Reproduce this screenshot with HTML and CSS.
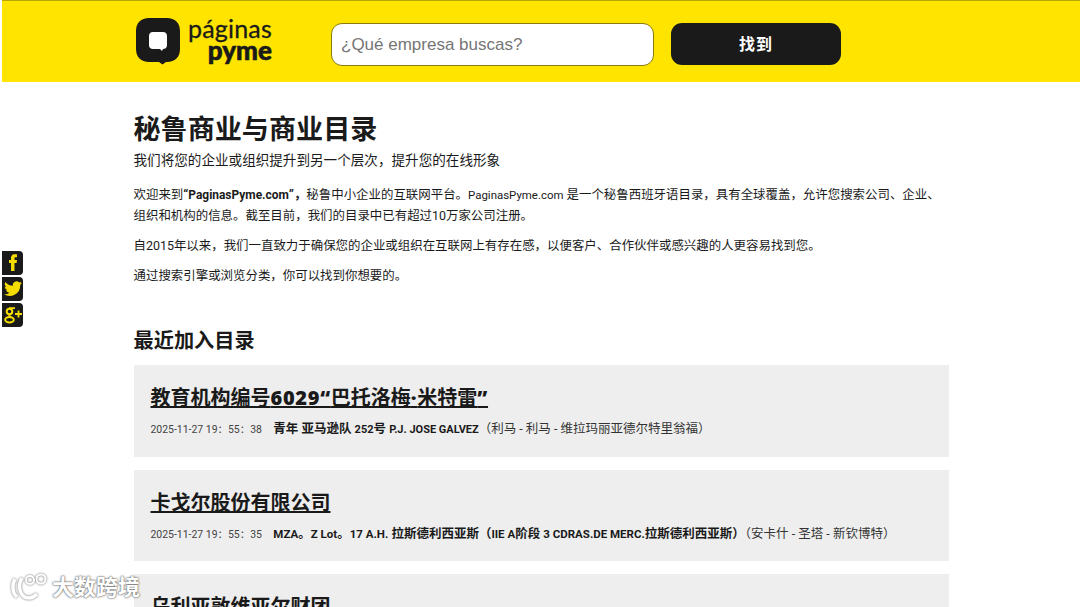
FILE: index.html
```html
<!DOCTYPE html>
<html lang="zh">
<head>
<meta charset="utf-8">
<title>秘鲁商业与商业目录</title>
<link rel="stylesheet" href="styles.css">
</head>
<body>
<header class="topbar">
  <div class="topbar-inner">
    <a class="logo">
      <svg class="logo-mark" width="46" height="48" viewBox="0 0 46 48">
        <path d="M13 1h18c8 0 13 5 13 13v18c0 8-5 13-13 13h-1l-3.500 2.500L23 45H13C5 45 0 40 0 32V14C0 6 5 1 13 1z" fill="#1a1a1a"/>
        <path d="M17 15h10c2.500 0 4 1.500 4 4v9c0 2.500-1.500 4-4 4l-1 2-2-2h-7c-2.500 0-4-1.500-4-4v-9c0-2.500 1.500-4 4-4z" fill="#fff"/>
      </svg>
      <span class="logo-text"><span class="logo-top">páginas</span><span class="logo-bottom">pyme</span></span>
    </a>
    <div class="search-box">¿Qué empresa buscas?</div>
    <div class="search-btn">找到</div>
  </div>
</header>

<aside class="social">
  <span class="social-item"><svg width="22" height="23" viewBox="0 0 22 23"><path d="M9 20v-8H7V9h2V7c0-2.500 1.300-3.800 3.600-3.800H15v3h-1.500c-.8 0-1 .4-1 1.100V9H15l-.4 3h-2.100v8z" fill="#f5dc00"/></svg></span>
  <span class="social-item"><svg width="22" height="23" viewBox="0 0 22 23"><path d="M20 6c-.7.3-1.300.5-2.100.6.800-.5 1.300-1.200 1.600-2-.7.400-1.500.7-2.300.9a3.700 3.700 0 0 0-6.300 3.300C7.900 8.600 5.200 7.200 3.400 5a3.700 3.700 0 0 0 1.100 4.900c-.6 0-1.200-.2-1.700-.5 0 1.800 1.300 3.300 3 3.700-.5.100-1.100.2-1.700.1.500 1.500 1.800 2.500 3.400 2.600A7.500 7.500 0 0 1 2 17.300 10.500 10.500 0 0 0 18.200 8c.7-.5 1.300-1.200 1.800-2z" fill="#f5dc00"/></svg></span>
  <span class="social-item"><svg width="22" height="23" viewBox="0 0 22 23" fill="none" stroke="#f5dc00"><circle cx="7.500" cy="8.500" r="2.800" stroke-width="2"/><ellipse cx="7.500" cy="16.800" rx="4.300" ry="2.700" stroke-width="2"/><path d="M7 5.200h6M8.500 11.300c-1.800 1-1.500 2 0 3" stroke-width="1.800"/><path d="M16.500 7.500v7M13 11h7" stroke-width="1.800"/></svg></span>
</aside>

<main class="content">
  <section class="intro">
    <h1>秘鲁商业与商业目录</h1>
    <h2 class="lead">我们将您的企业或组织提升到另一个层次，提升您的在线形象</h2>
    <p>欢迎来到<b>“<span class="lt-b">PaginasPyme.com</span>”，</b>秘鲁中小企业的互联网平台。<span class="lt">PaginasPyme.com</span> 是一个秘鲁西班牙语目录，具有全球覆盖，允许您搜索公司、企业、组织和机构的信息。截至目前，我们的目录中已有超过10万家公司注册。</p>
    <p>自2015年以来，我们一直致力于确保您的企业或组织在互联网上有存在感，以便客户、合作伙伴或感兴趣的人更容易找到您。</p>
    <p>通过搜索引擎或浏览分类，你可以找到你想要的。</p>
  </section>

  <section class="recent">
    <h3>最近加入目录</h3>
    <article class="card">
      <h4><a>教育机构编号<span class="heavy">6029“</span>巴托洛梅<span class="heavy">·</span>米特雷<span class="heavy">”</span></a></h4>
      <p class="meta"><time>2025-11-27 19：55：38</time><b>青年 亚马逊队 <span class="lt-s">252</span>号 <span class="lt-s">P.J. JOSE GALVEZ</span></b>（利马 - 利马 - 维拉玛丽亚德尔特里翁福）</p>
    </article>
    <article class="card">
      <h4><a>卡戈尔股份有限公司</a></h4>
      <p class="meta"><time>2025-11-27 19：55：35</time><b><span class="lt">MZA</span>。<span class="lt">Z Lot</span>。<span class="lt">17 A.H.</span> 拉斯德利西亚斯（<span class="lt">IIE A</span>阶段 <span class="lt">3 CDRAS.DE MERC.</span>拉斯德利西亚斯）</b>（安卡什 - 圣塔 - 新钦博特）</p>
    </article>
    <article class="card">
      <h4><a>乌利亚敦维亚尔财团</a></h4>
    </article>
  </section>
</main>

<div class="watermark"><svg width="44" height="30" viewBox="0 0 44 30" fill="none" stroke="#fff"><path d="M7 6c-3 5-3 14 2 18" stroke-width="3.500"/><path d="M14 5c-5 8-2 20 7 20 4 0 6-2 8-4" stroke-width="3.500"/><circle cx="22" cy="7" r="4" stroke-width="2"/><circle cx="33" cy="6" r="4.500" stroke-width="2"/></svg><span>大数跨境</span></div>
</body>
</html>
```
FILE: styles.css
```css
* { box-sizing: border-box; }
html, body { margin: 0; padding: 0; height: 607px; overflow: hidden; background: #fff; }
body {
  position: relative;
  font-family: "Roboto", "Noto Sans CJK SC", sans-serif;
  color: #1a1a1a;
}
.topbar {
  margin-left: 2px;
  height: 82px;
  background: #ffe400;
  border-top: 1px solid #b8a600;
}
.topbar-inner {
  display: flex;
  align-items: flex-start;
  padding: 15px 0 0 134px;
}
.logo { display: flex; width: 195px; height: 50px; padding-top: 1px; }
.logo-mark { display: block; flex: none; }
.logo-text {
  display: flex;
  flex-direction: column;
  align-items: flex-end;
  margin-left: 7px;
  width: 83px;
  font-family: "Lato", sans-serif;
  color: #1a1a1a;
  line-height: 23px;
}
.logo-top { font-size: 25px; -webkit-text-stroke: .3px #1a1a1a; letter-spacing: .2px; }
.logo-bottom { font-size: 26px; font-weight: 900; margin-top: -1px; -webkit-text-stroke: .6px #1a1a1a; }
.search-box {
  width: 323px;
  height: 43px;
  margin-top: 7px;
  padding-left: 9px;
  background: #fff;
  border: 1px solid #8a7c10;
  border-radius: 11px;
  font-family: "Liberation Sans", sans-serif;
  font-size: 17px;
  line-height: 42px;
  color: #757575;
}
.search-btn {
  width: 170px;
  height: 42px;
  margin: 7px 0 0 17px;
  background: #1a1a1a;
  border-radius: 11px;
  color: #fff;
  font-weight: 700;
  font-size: 16px;
  line-height: 44px;
  text-align: center;
  letter-spacing: 1px;
}
.social {
  position: absolute;
  left: 2px;
  top: 251px;
  display: flex;
  flex-direction: column;
  gap: 2px;
}
.social-item {
  display: block;
  width: 21px;
  height: 24px;
  background: #1a1a1a;
  border-radius: 0 4px 4px 0;
  overflow: hidden;
}
.social-item svg { display: block; }
.content { width: 815.500px; margin-left: 133.500px; }
.intro { padding-top: 30px; }
h1 { margin: 0; font-size: 27.100px; line-height: 36px; font-weight: 700; }
.lead { margin: 2px 0 14px; font-size: 13.580px; line-height: 20px; font-weight: 400; }
.intro p { margin: 0 0 9px; font-size: 12.450px; line-height: 21px; }
.lt, .lt-b, .lt-s { line-height: 1; }
.lt { font-size: .92em; }
.lt-b { font-size: .96em; }
.lt-s { font-size: .88em; }
.recent { padding-top: 31px; }
h3 { margin: 0 0 9px; font-size: 20.200px; line-height: 30px; font-weight: 700; }
.card {
  height: 91.500px;
  margin-bottom: 13px;
  padding: 17px 17px 0;
  background: #eee;
}
h4 { margin: 0; font-size: 20px; line-height: 32px; font-weight: 700; }
h4 a { text-decoration: underline; }
.heavy { font-family: "Open Sans", sans-serif; font-weight: 800; letter-spacing: .7px; line-height: 1; }
.meta { margin: 5px 0 0; font-size: 12.500px; line-height: 20px; color: #333; }
.meta time { font-size: 10.450px; margin-right: 11.500px; color: #444; }
.meta b { color: #1a1a1a; }
.watermark {
  position: absolute;
  left: 8px;
  bottom: 4px;
  display: flex;
  align-items: center;
  gap: 0;
  color: #fff;
  font-size: 22px;
  font-weight: 700;
  line-height: 30px;
  text-shadow: 0 0 2px #666, 0 0 2px #666;
}
.watermark svg { filter: drop-shadow(0 0 1px #666); }
```
